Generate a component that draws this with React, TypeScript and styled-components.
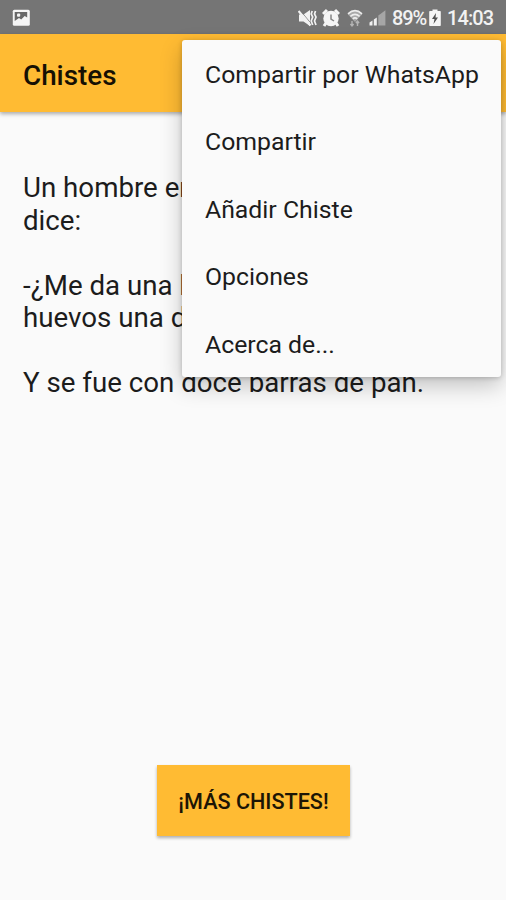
import React from 'react';
import styled, { createGlobalStyle } from 'styled-components';

const GlobalStyle = createGlobalStyle`
  * { box-sizing: border-box; }
  body { margin: 0; background: #fafafa; font-family: Roboto, sans-serif; color: #1c1c1c; }
`;

const Screen = styled.div`
  position: relative;
  width: 506px;
  height: 900px;
  display: flex;
  flex-direction: column;
  background: #fafafa;
  overflow: hidden;
`;

const StatusBar = styled.header`
  height: 34px;
  flex: none;
  display: flex;
  align-items: center;
  justify-content: space-between;
  padding: 1px 12px 0 12px;
  background: #757575;
  color: #f2f2f2;
`;

const StatusGroup = styled.div`
  display: flex;
  align-items: center;
`;

const Glyph = styled.svg<{ $gap?: number }>`
  display: block;
  flex: none;
  margin-right: ${p => p.$gap ?? 0}px;
`;

const StatusText = styled.span<{ $width: number; $gap?: number }>`
  width: ${p => p.$width}px;
  margin-right: ${p => p.$gap ?? 0}px;
  font-size: 20px;
  font-weight: 500;
  line-height: 34px;
  letter-spacing: -1.1px;
  white-space: nowrap;
`;

const Clock = styled(StatusText)`
  letter-spacing: -0.9px;
`;

const AppBar = styled.div`
  height: 78px;
  flex: none;
  display: flex;
  align-items: center;
  padding: 5px 23px 0;
  background: #ffbb33;
  box-shadow: 0 2px 4px rgba(0, 0, 0, 0.32);
`;

const Title = styled.h1`
  margin: 0;
  font-size: 27.8px;
  font-weight: 500;
  line-height: 36px;
  color: #161003;
`;

const Joke = styled.main`
  flex: 1;
  padding: 60.3px 0 0 23px;
  font-size: 27.7px;
  line-height: 32.4px;
  white-space: pre;
`;

const Footer = styled.footer`
  flex: none;
  display: flex;
  justify-content: center;
  padding: 0 0 64px 1px;
`;

const MoreButton = styled.button`
  width: 193px;
  height: 71px;
  padding: 2px 0 0;
  border: 0;
  background: #ffbb33;
  box-shadow: 0 2px 3px rgba(0, 0, 0, 0.3);
  color: #1c1505;
  font: 500 21.6px/28px Roboto, sans-serif;
  white-space: nowrap;
`;

const Menu = styled.ul`
  position: absolute;
  top: 40px;
  left: 182px;
  width: 319px;
  height: 337px;
  margin: 0;
  padding: 1px 0 0;
  list-style: none;
  background: #fafafa;
  border-radius: 3px;
  box-shadow: 0 9px 22px rgba(0, 0, 0, 0.22), 0 1px 5px rgba(0, 0, 0, 0.2);
`;

const MenuItem = styled.li`
  height: 67.4px;
  padding-left: 23px;
  font-size: 24.8px;
  line-height: 67.4px;
  white-space: nowrap;
`;

const joke = `Un hombre entra en una tienda y
dice:

-¿Me da una barra de pan y si hay
huevos una docena?

Y se fue con doce barras de pan.`;

const options = ['Compartir por WhatsApp', 'Compartir', 'Añadir Chiste', 'Opciones', 'Acerca de...'];

const PictureIcon = () => (
  <Glyph width="19" height="18" viewBox="0 0 19 18">
    <rect x="0.8" y="0.8" width="17" height="16" rx="1.5" fill="#f5f5f5" />
    <path d="M2.700 3h12.500v5.500l-2.500-1.500-3.500 3.500-2.200-1.500-4.300 3z" fill="#686868" />
    <rect x="5" y="4.5" width="3.2" height="3.2" rx="1" fill="#f5f5f5" />
  </Glyph>
);

const MuteIcon = () => (
  <Glyph width="20" height="20" viewBox="0 0 20 20" $gap={4}>
    <path d="M1 6.5h4.500L12 2v16l-6.500-4.500H1z" fill="#f2f2f2" />
    <path d="M2.200 2.400l9.800 11.800" stroke="#757575" strokeWidth="0.8" />
    <path d="M0.500 3l12 14.500" stroke="#f2f2f2" strokeWidth="2.2" />
    <path d="M14.200 3l-1 3 1.500 3-1.500 4 1.500 4M17.500 3l-1 3 1.500 3-1.500 4 1.500 4" fill="none" stroke="#f2f2f2" strokeWidth="1.7" />
  </Glyph>
);

const AlarmIcon = () => (
  <Glyph width="18" height="20" viewBox="0 0 18 20" $gap={7}>
    <circle cx="9" cy="10.5" r="7.7" fill="#f5f5f5" />
    <path d="M1 6l4-4M17 6l-4-4M4 15l-2 3M14 15l2 3" stroke="#f5f5f5" strokeWidth="3" />
    <path d="M9 6.500v4.500l3 2" fill="none" stroke="#858585" strokeWidth="1.5" />
  </Glyph>
);

const WifiIcon = () => (
  <Glyph width="16" height="20" viewBox="0 0 16 20" $gap={6}>
    <path d="M0.800 6.200Q8 -0.800 15.200 6.200L8 14z" fill="#a9a9a9" />
    <path d="M1 5.800Q8 -0.600 15 5.800M3.400 8.300Q8 4.400 12.600 8.300M5.800 10.800Q8 9 10.200 10.800" fill="none" stroke="#ededed" strokeWidth="1.6" />
    <path d="M5 13v5M3.400 16L5 18l1.600-2M10.500 18v-5M8.900 15l1.600-2 1.600 2" fill="none" stroke="#b5b5b5" strokeWidth="1.4" />
  </Glyph>
);

const SignalIcon = () => (
  <Glyph width="17" height="20" viewBox="0 0 17 20" $gap={6}>
    <path d="M0.500 14.500l3-2v5h-3zM4.800 11.500l3-2v8h-3z" fill="#f0f0f0" />
    <path d="M9.300 7.500l2.800-2v12H9.300zM12.100 5.500l4.300-3.200v15.200h-4.300z" fill="#a6a6a6" />
  </Glyph>
);

const BatteryIcon = () => (
  <Glyph width="12" height="20" viewBox="0 0 12 20" $gap={6}>
    <path d="M3.500 1.500h5V3H11q.8 0 .8.8v13.400q0 .8-.8.8H1q-.8 0-.8-.8V3.800q0-.8.8-.8h2.500z" fill="#f5f5f5" />
    <path d="M7 5L3 11h2.500L4.500 16 9 9.500H6.500z" fill="#4e4e4e" />
  </Glyph>
);

export default function App() {
  return (
    <>
      <GlobalStyle />
      <Screen>
        <StatusBar>
          <PictureIcon />
          <StatusGroup>
            <MuteIcon />
            <AlarmIcon />
            <WifiIcon />
            <SignalIcon />
            <StatusText $width={34} $gap={3}>89%</StatusText>
            <BatteryIcon />
            <Clock $width={47}>14:03</Clock>
          </StatusGroup>
        </StatusBar>
        <AppBar>
          <Title>Chistes</Title>
        </AppBar>
        <Joke>{joke}</Joke>
        <Footer>
          <MoreButton>¡MÁS CHISTES!</MoreButton>
        </Footer>
        <Menu>
          {options.map(label => (
            <MenuItem key={label}>{label}</MenuItem>
          ))}
        </Menu>
      </Screen>
    </>
  );
}
